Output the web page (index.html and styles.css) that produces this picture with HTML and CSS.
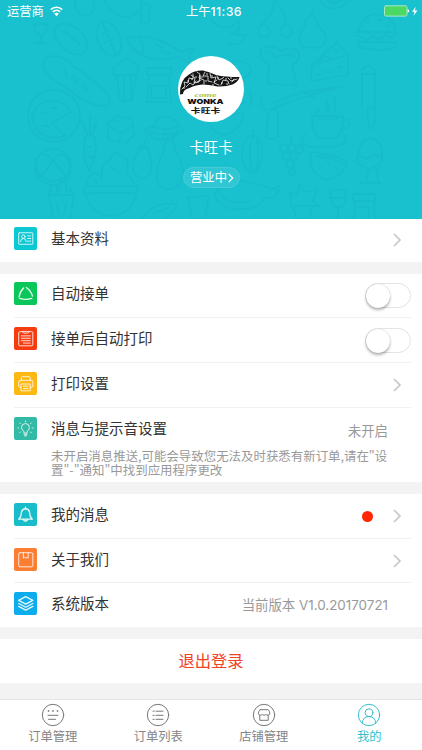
FILE: index.html
```html
<!DOCTYPE html>
<html lang="zh-CN">
<head>
<meta charset="utf-8">
<title>我的</title>
<link rel="stylesheet" href="styles.css">
</head>
<body>
<div class="screen">
  <header class="hero">
    <svg class="doodles" viewBox="0 0 422 219" aria-hidden="true">
      <path d="M75 0q0 16 12 16 10-2 6-16M104 0q8 17 24 17 12-2 14-17M34 24h13q0 10-6 11v8M41 35q-7-2-7-11M35 43h12"/>
      <ellipse cx="71" cy="39" rx="19" ry="12" transform="rotate(42 71 39)"/><path d="M64 31q8 6 16 13"/>
      <ellipse cx="109" cy="39" rx="11" ry="18" transform="rotate(-22 109 39)"/><path d="M103 24l13 31M102 34l7-3M105 43l8-4"/>
      <path d="M126 38q28-6 55 14l14-4-6 7 2 8-12-6q-38 10-53-19zM139 37q6 8 3 18M155 44l8 4M162 51l8 3"/>
      <path d="M46 58q14-6 28 8l26 20q14 12 8 20-18 1-38-15L49 76q-9-10-3-18zM64 69l3 8M73 75l4 9M84 83l3 9"/>
      <path d="M114 75q-4-8 5-9 5-13 14-4 8 3 4 13zM117 76l3 25h12l4-25M124 77v22M131 77v22M147 68h24v7h-24zM149 75l-2 27h24l-2-27M151 86h15v12h-15z"/>
      <path d="M28 119a26 26 0 1 1 39 19 26 26 0 0 1-39-19zM32 117a21 21 0 0 1 39-5L52 123l13 13q-28 7-33-19M40 113h6M52 108h5M43 126h6"/>
      <path d="M53 160q-12-13-17 1 0 18 17 20 18-2 17-18-8-15-17-3l-10 15M53 160l12 15"/><circle cx="53" cy="167" r="18"/>
      <path d="M85 137q5-5 10 0 3 18-6 34-8-16-4-34zM88 136l-6-15M90 136v-21M92 136l5-15M85 147h6M87 157h6"/>
      <path d="M107 124l10-8 15 3 2 16-8 8-17-3zM110 127l10 6 12-6M120 133v8M114 122l8-2"/>
      <path d="M145 131q2-4 8-4 5-14 17-10 7 2 8 10 6 1 5 5-18 5-38-1zM154 127q10 4 22 0M149 134l6 5h18l5-5"/>
      <path d="M84 186h53q-1 28-26 30-24-2-27-30zM87 185q0-13 11-12l4 6M102 178q-2-15 8-18 4-12 13-3 7 2 4 16M126 176q8 0 8 10M94 179l4 5M111 167l8 5M84 193h52"/>
      <path d="M140 148q-8 12-7 21 5 15 17 5 4-13-3-26zM139 147q4-5 9 1M144 145l3-8M164 151q1-12 4-12 6 0 8 13 13 20 2 34-13 8-20-3-4-17 6-32zM169 138l-5-8M171 139l7-9"/>
      <path d="M49 195l5 25h16l4-25zM49 195l2-9h6v7l4-13 5 2v10l5-3 3 6M56 202l3 12M66 202l-2 12M142 219q12-18 35-15-5 13-15 15M155 213l13-5M188 197l4 22h13l4-23z"/>
      <path d="M274 0q1 13-13 25M274 0q12 11 12 25"/><circle cx="264" cy="31" r="6"/><circle cx="286" cy="31" r="6"/>
      <path d="M305 26q1-10 6-10 6 0 7 10 14 12 3 21-10 2-19-1-7-8 3-20zM311 16l3-7M320 0q4 10 17 8 9-2 10-8M327 0q8 6 14 0M141 7q6-7 9 0l-1 15q-6 5-8-1z"/>
      <path d="M358 32q4-17 18-18 18 2 20 18zM356 32h42l-6 6-6-3-7 5-6-4-7 4-10-5M359 42h37v5q-18 6-37 0zM366 22h3M378 20h3M386 26h3"/>
      <path d="M211 20q16 16 27 0 5 12-8 14l16 1q-5 12-18 8M231 61q19 0 20 9-2 8-13 10"/>
      <path d="M262 48q11-5 18 3 13-6 19 2 1 8-7 12l5 20-29-1 1-20q-13-6-7-16zM265 51q8 0 11 7 11-6 18-2"/>
      <path d="M312 65l25-23 11 13v20l-37 6zM312 65l36-10M320 61q4-7 10-3M324 72h8M338 67h4M315 75h5M334 50h4"/>
      <path d="M362 108V70q6-8 13 0v38M362 74h13M270 104l26-10 46-8-44 13-25 9M302 91l13 6M250 92q3 10 0 15M262 95q-3 10 3 15M327 99v12M335 98v12"/>
      <path d="M268 112q5-6 10 0v24q-5 5-12 1zM217 120q14-6 27-8-2 18-20 23-13-4-13-9M230 112l15-10M367 110q5-4 9 0l-3 18h-4z"/>
      <path d="M312 116h31q0 18-7 22h-16q-9-6-8-22zM343 120q9-2 6 5-3 5-8 5M305 134q-12 14 18 13 31 0 20-13M316 116q13 7 26 0M316 114l3-6M330 112l-2-8"/>
      <path d="M247 138q-8 13-3 27 8 15 15 2 7-14 0-28-6-7-12-1zM253 138v-8M251 141q-3 15 1 30M257 141q3 15-1 28"/>
      <g><circle cx="284" cy="148" r="4"/><circle cx="292" cy="148" r="4"/><circle cx="299" cy="149" r="4"/><circle cx="286" cy="156" r="4"/><circle cx="294" cy="156" r="4"/><circle cx="290" cy="164" r="4"/><circle cx="292" cy="172" r="3"/></g><path d="M291 144v-9"/>
      <path d="M312 152q20 2 35 10-3 15-22 18-19-10-13-28zM316 156q16 1 27 8M320 166h2M328 164h2M327 173h2M336 168h2M357 162q2-25 15-24 12 4 10 23-12 15-25 1zM359 155l8 4 6-5 9 3M369 169l-3 14h13l-3-14M359 183h22"/>
      <path d="M214 196q6-16 28-15 20 4 37 9-3 10-15 8-6 12-22 11-18 2-28-13zM221 195q8 10 27 7M271 190l8-4M290 192l7 3 2-11 6 8 12-2-4 11 6 5h-28zM293 206l3 13h14l2-13"/>
      <path d="M330 191q8-3 16 0 0 18-8 16-8 1-8-16zM338 207v12M330 198h16M353 194h22v7h-22zM355 201l-1 18M374 201l1 18M358 207h11v10"/>
    </svg>
    <div class="status">
      <div class="carrier">运营商
        <svg class="wifi" viewBox="0 0 12 10"><path d="M.7 3.2a7.6 7.6 0 0 1 10.600 0M2.600 5.300a4.900 4.900 0 0 1 6.800 0"/><path class="solid" d="M3.800 7q2.200-1.800 4.400 0L6 9.400z"/></svg>
      </div>
      <div class="clock">上午<span class="digits">11:36</span></div>
      <div class="power">
        <svg viewBox="0 0 34 12"><rect class="shell" x=".5" y=".8" width="22.500" height="10.300" rx="1.500"/><path class="white" d="M23.600 4.300q1.600.3 1.600 1.700t-1.600 1.700zM31.700 1.800L28 6.800h2.500l-1 4 4-5.400h-2.600z"/></svg>
      </div>
    </div>
    <svg class="avatar" viewBox="0 0 66 66">
      <circle cx="33" cy="33" r="33" fill="#fff"/>
      <path fill="#151515" d="M2 38.500Q1.500 24 11 18.500 17 14 25 14.500q6 1 13 4.500 9 2 23.500 2-1 5-7 7.500-7 2.500-15 2-9-2-15-2-8 .5-13 3.500Q5 33.500 5 38z"/>
      <path class="swirl" d="M4 33l3-3-1-4 4 1 1-5 4 1 0-5M8 31l4-4 3 2 3-4M13 19l4 3-1 5 5-1 1-5 3 0M19 16l3 2-1 4 5 2 0 4M27 16l-2 4 5 0 0 5 4 1M32 17l1 5 5-1-2 6 5 2M39 20l2 4 4-2 1-1M43 29l2-5 5 1 1 3M50 22l3 3 6-2M23 24l-4 2M36 26l3-2M56 23l-2 3"/>
      <path class="specks" d="M6 32h0M10 25h0M14 23h0M18 21h0M22 20h0M29 18h0M28 25h0M34 20h0M35 29h0M40 22h0M44 27h0M48 23h0M53 22h0M49 28h0"/>
      <text class="come" x="16.500" y="41.300" textLength="22" lengthAdjust="spacingAndGlyphs">come</text>
      <text class="wonka" x="9.300" y="48.300" textLength="36.300" lengthAdjust="spacingAndGlyphs">WONKA</text>
      <text class="brand" x="12.800" y="56.900" textLength="29.500" lengthAdjust="spacingAndGlyphs">卡旺卡</text>
    </svg>
    <div class="shop">卡旺卡</div>
    <div class="state">营业中<svg viewBox="0 0 6 10"><path d="M1 1.200L4.700 5 1 8.800"/></svg></div>
  </header>

  <main>
    <section class="group">
      <div class="row first"><span class="tile cyan"><svg viewBox="0 0 22 22"><rect x="4.500" y="5.500" width="13.500" height="11" rx=".5"/><circle cx="9" cy="9.200" r="1.700"/><path d="M6.300 14q.2-3 2.700-3t2.700 3M13 8.500h3M13 11h3M13 13.500h3"/></svg></span><span class="label">基本资料</span><svg class="arrow" viewBox="0 0 9 14"><path d="M1 1l6 6-6 6"/></svg></div>
    </section>
    <section class="group">
      <div class="row"><span class="tile green"><svg class="bold" viewBox="0 0 22 22"><path d="M9.200 5.800Q5.500 9.500 4.800 14.200M11.800 5.300q4.500 3.200 5.900 8.200M5.500 15.700q5.500 2 11.500 0"/></svg></span><span class="label">自动接单</span><span class="switch"></span></div>
      <div class="row"><span class="tile red"><svg viewBox="0 0 22 22"><path d="M8 4.500H5.500q-1 0-1 1V17q0 1 1 1H17q1 0 1-1V5.500q0-1-1-1h-2.500M8 4.500l1.200 1.300h4.100l1.200-1.300zM7 8.500h8.500M7 10.800h8.500M7 13.100h8.500M9 15.400h6.500"/></svg></span><span class="label">接单后自动打印</span><span class="switch"></span></div>
      <div class="row"><span class="tile yellow"><svg viewBox="0 0 22 22"><path d="M7 8V5.500q0-1 1-1h6.500q1 0 1 1V8M7 14.500H5.500q-1 0-1-1V9.500Q4.500 8 6 8h10.500q1.500 0 1.500 1.500v4q0 1-1 1h-1.500M7 11.500h8.500V18H7zM9 13.500h4.500M9 15.800h4.500"/></svg></span><span class="label">打印设置</span><svg class="arrow" viewBox="0 0 9 14"><path d="M1 1l6 6-6 6"/></svg></div>
      <div class="row message"><span class="tile teal"><svg viewBox="0 0 22 22"><path d="M9.500 15v-1.300Q7.200 12.500 7.200 10a3.700 3.700 0 0 1 7.500 0q0 2.500-2.200 3.700V15zM9.500 16.500h3M10 18h2M11 3.800v.7M5.500 5.700l.7.700M16.500 5.700l-.7.700M3.800 10.500h.8M17.400 10.500h.8M5.500 15l.7-.7M16.500 15l-.7-.7"/></svg></span><span class="label">消息与提示音设置</span><span class="value">未开启</span></div>
      <p class="note">未开启消息推送,可能会导致您无法及时获悉有新订单,请在"设<br>置"-"通知"中找到应用程序更改</p>
    </section>
    <section class="group">
      <div class="row"><span class="tile aqua"><svg class="bold" viewBox="0 0 22 22"><path d="M4.500 15.500q2.500-2.200 2.500-6Q7.500 5.800 11 5.500q3.500.3 4 4 0 3.800 2.500 6zM11 4v1.500M9 16q2 2.500 4 0"/></svg></span><span class="label">我的消息</span><span class="dot"></span><svg class="arrow" viewBox="0 0 9 14"><path d="M1 1l6 6-6 6"/></svg></div>
      <div class="row"><span class="tile orange"><svg viewBox="0 0 22 22"><rect x="4.500" y="4.500" width="13.500" height="13.500" rx="1.200"/><path d="M9 4.500v5.300l1.200-1 1.100 1 1.200-1 1 1V4.500"/></svg></span><span class="label">关于我们</span><svg class="arrow" viewBox="0 0 9 14"><path d="M1 1l6 6-6 6"/></svg></div>
      <div class="row"><span class="tile blue"><svg class="bold" viewBox="0 0 22 22"><path d="M4.500 8l6.700-3.600L18 8l-6.800 3.600zM4.500 11l6.700 3.600L18 11M4.500 13.800l6.700 3.600 6.800-3.600"/></svg></span><span class="label">系统版本</span><span class="value version">当前版本 V1.0.20170721</span></div>
    </section>
    <div class="logout">退出登录</div>
  </main>

  <nav class="tabs">
    <div class="tab"><svg viewBox="0 0 24 24"><circle cx="12" cy="12" r="10.700"/><path d="M7 12.300h10M7.500 16.300h7"/><path class="dots" d="M7.500 7.900h0M12 7.900h0M16.500 7.900h0"/></svg><span>订单管理</span></div>
    <div class="tab"><svg viewBox="0 0 24 24"><circle cx="12" cy="12" r="10.700"/><path d="M10 8.200h7M10 12.300h7M10 16.300h7M7 8.200h1.200M7 12.300h1.200M7 16.300h1.200"/></svg><span>订单列表</span></div>
    <div class="tab"><svg viewBox="0 0 24 24"><circle cx="12" cy="12" r="10.700"/><path d="M8.300 6.700h7.800q1.800 1.500 1.700 3.500 0 2-1.900 2-1.200 0-1.900-.8-.8.800-1.900.8t-1.900-.8q-.7.800-1.900.8-1.900 0-1.900-2 0-2 1.900-3.500zM7.800 12.500v4.800h8.400v-4.800"/></svg><span>店铺管理</span></div>
    <div class="tab active"><svg viewBox="0 0 24 24"><circle cx="12" cy="12" r="10.700"/><circle cx="12" cy="9.700" r="3.900"/><path d="M5.300 20.200q.2-6.600 6.700-6.600t6.700 6.600"/></svg><span>我的</span></div>
  </nav>
</div>
</body>
</html>
```
FILE: styles.css
```css
* { box-sizing: border-box; }
body {
  margin: 0;
  font-family: "Noto Sans CJK SC", sans-serif;
  color: #333;
  background: #f3f3f3;
}
svg { display: block; fill: none; stroke-linecap: round; stroke-linejoin: round; }
.screen { width: 422px; height: 750px; display: flex; flex-direction: column; overflow: hidden; }

.hero {
  position: relative;
  height: 219px;
  flex: none;
  display: flex;
  flex-direction: column;
  align-items: center;
  background: #19c0ce;
  color: #fff;
}
.doodles { position: absolute; inset: 0; width: 422px; height: 219px; stroke: #16b5c4; stroke-width: 1.7; opacity: .38; }
.status {
  position: relative;
  width: 100%;
  height: 22px;
  padding: 0 4px 0 7px;
  display: grid;
  grid-template-columns: 1fr auto 1fr;
  align-items: center;
  font-size: 12.3px;
  line-height: 20px;
}
.carrier { display: flex; align-items: center; gap: 6px; }
.wifi { width: 13px; height: 11px; stroke: #fff; stroke-width: 1.5; stroke-linecap: butt; }
.wifi .solid { fill: #fff; stroke: none; }
.clock { padding-left: 3px; }
.digits { font-family: Inter, sans-serif; font-weight: 500; letter-spacing: .4px; }
.power { justify-self: end; }
.power svg { width: 34px; height: 12px; }
.shell { fill: #4bd964; stroke: #a9e7c5; stroke-width: 1; }
.white { fill: #fff; }
.avatar { position: relative; width: 66px; height: 66px; margin-top: 34px; }
.swirl { stroke: #fff; stroke-width: .75; }
.specks { stroke: #fff; stroke-width: 1.5; }
.come { font: italic bold 7px "Liberation Serif", serif; fill: #a8c43c; }
.wonka { font: 900 6.7px Inter, sans-serif; fill: #111; }
.brand { font: bold 7.3px "Noto Sans CJK SC", sans-serif; fill: #111; }
.shop { position: relative; margin-top: 14px; font-size: 14.3px; line-height: 22px; }
.state {
  position: relative;
  display: flex;
  align-items: center;
  justify-content: center;
  gap: 1px;
  width: 57px;
  height: 21px;
  margin-top: 9px;
  padding-left: 2px;
  border: 1px solid #47ccd7;
  border-radius: 11px;
  background: #31c6d3;
  font-size: 12.3px;
  line-height: 19px;
}
.state svg { width: 6px; height: 10px; stroke: #fff; stroke-width: 1.2; }

main { display: flex; flex-direction: column; gap: 11.5px; }
.group { background: #fff; padding-left: 14px; }
.row {
  height: 44.8px;
  display: flex;
  align-items: center;
  margin-right: 11px;
  padding-bottom: 3px;
  border-bottom: 1px solid #f1f1f1;
}
.row:last-child { border-bottom: 0; height: 44px; }
.row.first { height: 43px; padding-bottom: 3.5px; }
.row.message { border: 0; height: 41px; padding-bottom: 0; }
.tile { width: 23px; height: 23px; flex: none; border-radius: 2px; }
.tile svg { width: 23px; height: 23px; stroke: #fff; stroke-opacity: .82; stroke-width: .95; }
.tile svg.bold { stroke-width: 1.25; stroke-opacity: .9; }
.cyan { background: #0bc8d3; }
.green { background: #0ac759; }
.red { background: #f53b10; }
.yellow { background: #fdb813; }
.teal { background: #31baa5; }
.aqua { background: #19bdc9; }
.orange { background: #fb7e33; }
.blue { background: #0cadec; }
.label { margin: -1px 0 0 14px; font-size: 14.5px; line-height: 22px; flex: 1; }
.arrow { width: 9px; height: 14px; margin: 3px 9px 0 0; stroke: #c5c5ca; stroke-width: 1.6; stroke-linecap: butt; stroke-linejoin: miter; }
.switch { width: 46px; height: 25px; margin-top: 3px; border: 1px solid #e3e3e3; border-radius: 13px; }
.switch::before {
  content: "";
  display: block;
  width: 24px;
  height: 24px;
  border-radius: 50%;
  background: #fff;
  box-shadow: 0 2px 3px rgba(0,0,0,.3), 0 0 1px rgba(0,0,0,.25);
}
.value { margin: 3px 23px 0 0; font-size: 13.4px; line-height: 20px; color: #999; }
.version { font-family: Inter, "Noto Sans CJK SC", sans-serif; }
.note { margin: 0; padding-left: 37px; height: 33.5px; font-size: 12.45px; line-height: 14.5px; color: #999; white-space: nowrap; }
.dot { width: 11px; height: 11px; margin: 4px 20px 0 0; border-radius: 50%; background: #ff2600; }
.logout { height: 44px; background: #fff; text-align: center; font-size: 16.3px; line-height: 42px; color: #f0431f; }

.tabs { display: flex; height: 51px; flex: none; margin-top: auto; padding-top: 3px; background: #fff; border-top: 1px solid #e5e5e5; }
.tab { flex: 1; display: flex; flex-direction: column; align-items: center; font-size: 12.3px; line-height: 18px; color: #858585; }
.tab svg { width: 24px; height: 24px; stroke: #777; stroke-width: 1; }
.tab .dots { stroke-width: 1.7; }
.tab.active { color: #2fbfcc; }
.tab.active svg { stroke: #35bfcb; }
```
